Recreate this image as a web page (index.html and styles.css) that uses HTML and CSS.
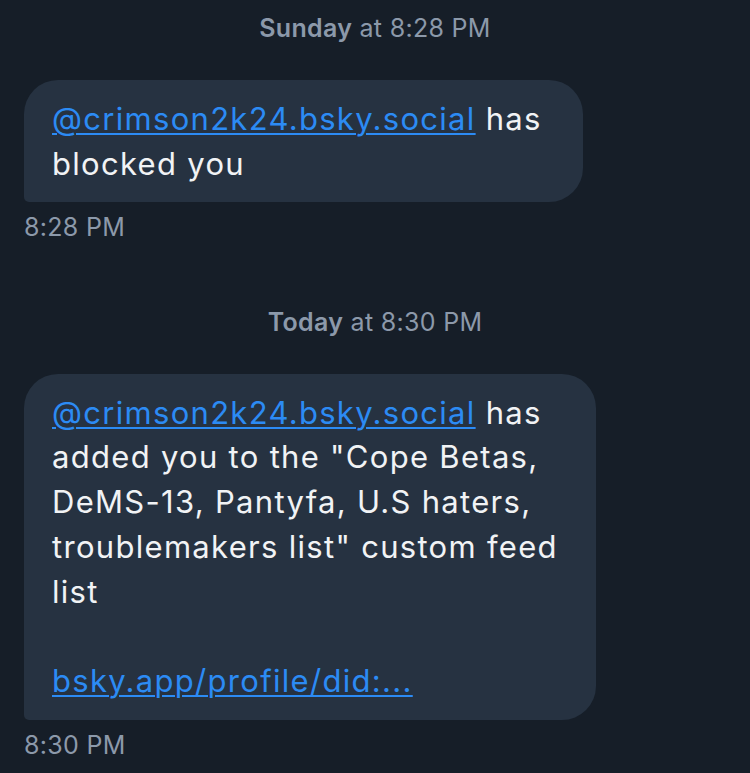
FILE: index.html
```html
<!DOCTYPE html>
<html>
<head>
<meta charset="utf-8">
<link rel="stylesheet" href="styles.css">
</head>
<body>
<div class="chat">
  <div class="day"><span class="day-name">Sunday</span> at 8:28 PM</div>
  <div class="msg">
    <div class="bubble b1"><a class="link" href="#">@crimson2k24.bsky.social</a> has blocked you</div>
    <div class="time">8:28 PM</div>
  </div>
  <div class="day day2"><span class="day-name">Today</span> at 8:30 PM</div>
  <div class="msg">
    <div class="bubble b2"><a class="link" href="#">@crimson2k24.bsky.social</a> has added you to the "Cope Betas, DeMS-13, Pantyfa, U.S haters, troublemakers list" custom feed list<br><br><a class="link" href="#">bsky.app/profile/did:...</a></div>
    <div class="time">8:30 PM</div>
  </div>
</div>
</body>
</html>
```
FILE: styles.css
```css
html, body {
  margin: 0;
  padding: 0;
  background: #161e28;
}
body {
  width: 750px;
  height: 773px;
  overflow: hidden;
  font-family: Inter, "Noto Sans", sans-serif;
}
.chat {
  display: flex;
  flex-direction: column;
  padding: 0 24px;
}
.day {
  text-align: center;
  color: #8c99aa;
  font-size: 25px;
  letter-spacing: 0.3px;
  line-height: 30px;
  padding-top: 13px;
  margin-bottom: 37px;
}
.day2 {
  padding-top: 0;
  margin-top: 65px;
  margin-bottom: 37px;
}
.day-name {
  font-weight: 600;
}
.msg {
  display: flex;
  flex-direction: column;
  align-items: flex-start;
}
.bubble {
  background: #263241;
  color: #f1f3f5;
  font-size: 31px;
  letter-spacing: 1.3px;
  line-height: 44.8px;
  padding: 17px 28px 15px 28px;
  border-radius: 34px 34px 34px 5px;
  box-sizing: border-box;
}
.b1 { width: 559px; }
.b2 { width: 572px; padding-bottom: 16px; }
.link {
  color: #2c8bf4;
  text-decoration: underline;
  text-decoration-thickness: 2px;
  text-underline-offset: 3px;
}
.time {
  color: #8c99aa;
  font-size: 25px;
  letter-spacing: 0.3px;
  line-height: 30px;
  margin-top: 10px;
}
```
